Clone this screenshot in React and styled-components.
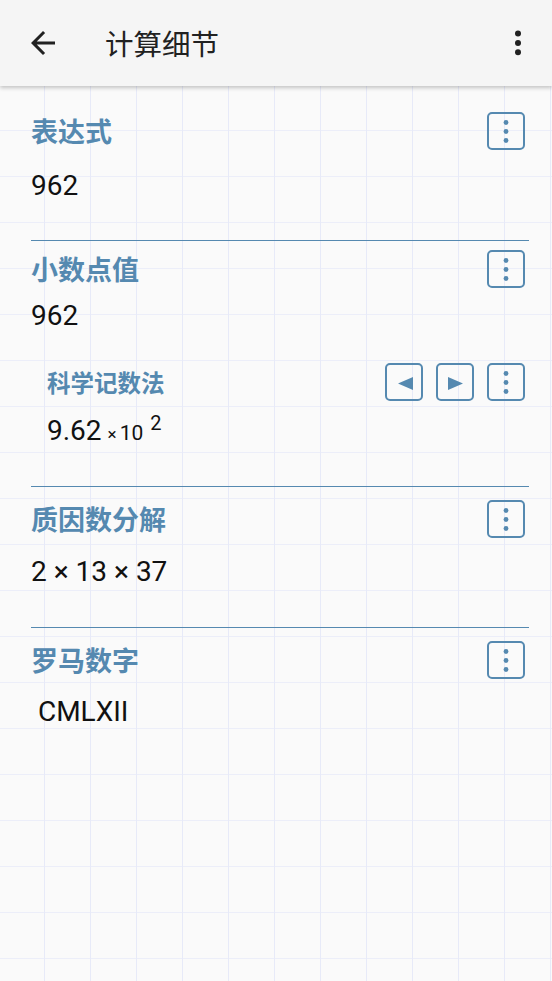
import React from 'react'
import styled, { createGlobalStyle } from 'styled-components'

const accent = '#5589b0'

const GlobalStyle = createGlobalStyle`
  html, body {
    margin: 0;
    padding: 0;
  }
  body {
    background-color: #fafafa;
    background-image:
      linear-gradient(to right, #e7eaf8 0, #e7eaf8 1px, transparent 1px),
      linear-gradient(to bottom, #eceef9 0, #eceef9 1px, transparent 1px);
    background-size: 46px 46px;
    background-position: 44px 38px;
    font-family: Roboto, "Noto Sans CJK SC", sans-serif;
  }
`

const Page = styled.div`
  width: 552px;
  min-height: 981px;
`

const AppBar = styled.header`
  height: 86px;
  background: #f5f5f5;
  box-shadow: 0 2px 4px rgba(0, 0, 0, 0.22);
  display: flex;
  align-items: center;
  padding: 0 16px 0 25px;
  box-sizing: border-box;
  position: relative;
  z-index: 1;
`

const BarIcon = styled.svg`
  width: 36px;
  height: 36px;
  fill: #212121;
  flex: none;
`

const BarTitle = styled.h1`
  flex: 1;
  margin: 0 0 0 44px;
  font-family: "Noto Sans CJK SC", sans-serif;
  font-size: 28.5px;
  font-weight: 400;
  color: #212121;
  line-height: 40px;
`

const Content = styled.main`
  padding: 0 23px 0 31px;
`

const Section = styled.section`
  padding-top: ${p => p.$top}px;
  padding-bottom: ${p => p.$bottom}px;
  border-bottom: ${p => (p.$last ? 'none' : `1px solid ${accent}`)};
`

const TitleRow = styled.div`
  display: flex;
  align-items: center;
  justify-content: space-between;
  height: 38px;
`

const SectionTitle = styled.h2`
  margin: 0;
  font-family: "Noto Sans CJK SC", sans-serif;
  font-size: ${p => p.$size}px;
  font-weight: 700;
  color: ${accent};
  line-height: 38px;
`

const Actions = styled.div`
  display: flex;
  gap: 13px;
  margin-right: 4px;
`

const IconButton = styled.button`
  width: 38px;
  height: 38px;
  box-sizing: border-box;
  border: 2px solid ${accent};
  border-radius: 5px;
  background: transparent;
  padding: 0;
  display: flex;
  align-items: center;
  justify-content: center;
  svg {
    width: 34px;
    height: 34px;
    fill: ${accent};
  }
`

const Value = styled.div`
  margin-top: ${p => p.$gap}px;
  font-family: Roboto, sans-serif;
  font-size: 28px;
  line-height: 36px;
  height: 36px;
  color: #111;
  white-space: pre;
`

const SubSection = styled.div`
  margin-top: 29px;
  padding-left: 16px;
`

const Times = styled.span`
  font-size: 17px;
  margin: 0 3px 0 6px;
`

const Base = styled.span`
  font-size: 21px;
`

const Exp = styled.sup`
  font-size: 20px;
  margin-left: 7px;
  vertical-align: 10px;
  line-height: 0;
`

const ArrowBack = () => (
  <BarIcon viewBox="0 0 24 24">
    <path d="M20 11H7.83l5.59-5.59L12 4l-8 8 8 8 1.41-1.41L7.83 13H20v-2z" />
  </BarIcon>
)

const MoreVert = () => (
  <BarIcon viewBox="0 0 24 24">
    <circle cx="12" cy="5.6" r="2" />
    <circle cx="12" cy="12" r="2" />
    <circle cx="12" cy="18.2" r="2" />
  </BarIcon>
)

const Dots = () => (
  <svg viewBox="0 0 34 34">
    <circle cx="17" cy="8.5" r="2.4" />
    <circle cx="17" cy="17.5" r="2.4" />
    <circle cx="17" cy="26.5" r="2.4" />
  </svg>
)

const Left = () => (
  <svg viewBox="0 0 34 34">
    <polygon points="26,12 26,25 11,18.5" />
  </svg>
)

const Right = () => (
  <svg viewBox="0 0 34 34">
    <polygon points="10,12 10,25 25,18.5" />
  </svg>
)

const MenuButton = () => (
  <IconButton aria-label="更多">
    <Dots />
  </IconButton>
)

export default function App() {
  return (
    <Page>
      <GlobalStyle />
      <AppBar>
        <ArrowBack />
        <BarTitle>计算细节</BarTitle>
        <MoreVert />
      </AppBar>
      <Content>
        <Section $top={26} $bottom={36}>
          <TitleRow>
            <SectionTitle $size={27}>表达式</SectionTitle>
            <Actions><MenuButton /></Actions>
          </TitleRow>
          <Value $gap={18}>962</Value>
        </Section>

        <Section $top={9} $bottom={37}>
          <TitleRow>
            <SectionTitle $size={27}>小数点值</SectionTitle>
            <Actions><MenuButton /></Actions>
          </TitleRow>
          <Value $gap={10}>962</Value>
          <SubSection>
            <TitleRow>
              <SectionTitle $size={23.5}>科学记数法</SectionTitle>
              <Actions>
                <IconButton aria-label="上一个"><Left /></IconButton>
                <IconButton aria-label="下一个"><Right /></IconButton>
                <MenuButton />
              </Actions>
            </TitleRow>
            <Value $gap={12}>
              9.62<Times>×</Times><Base>10</Base><Exp>2</Exp>
            </Value>
          </SubSection>
        </Section>

        <Section $top={13} $bottom={37}>
          <TitleRow>
            <SectionTitle $size={27}>质因数分解</SectionTitle>
            <Actions><MenuButton /></Actions>
          </TitleRow>
          <Value $gap={16}>2 × 13 × 37</Value>
        </Section>

        <Section $top={13} $bottom={0} $last>
          <TitleRow>
            <SectionTitle $size={27}>罗马数字</SectionTitle>
            <Actions><MenuButton /></Actions>
          </TitleRow>
          <Value $gap={15}> CMLXII</Value>
        </Section>
      </Content>
    </Page>
  )
}
